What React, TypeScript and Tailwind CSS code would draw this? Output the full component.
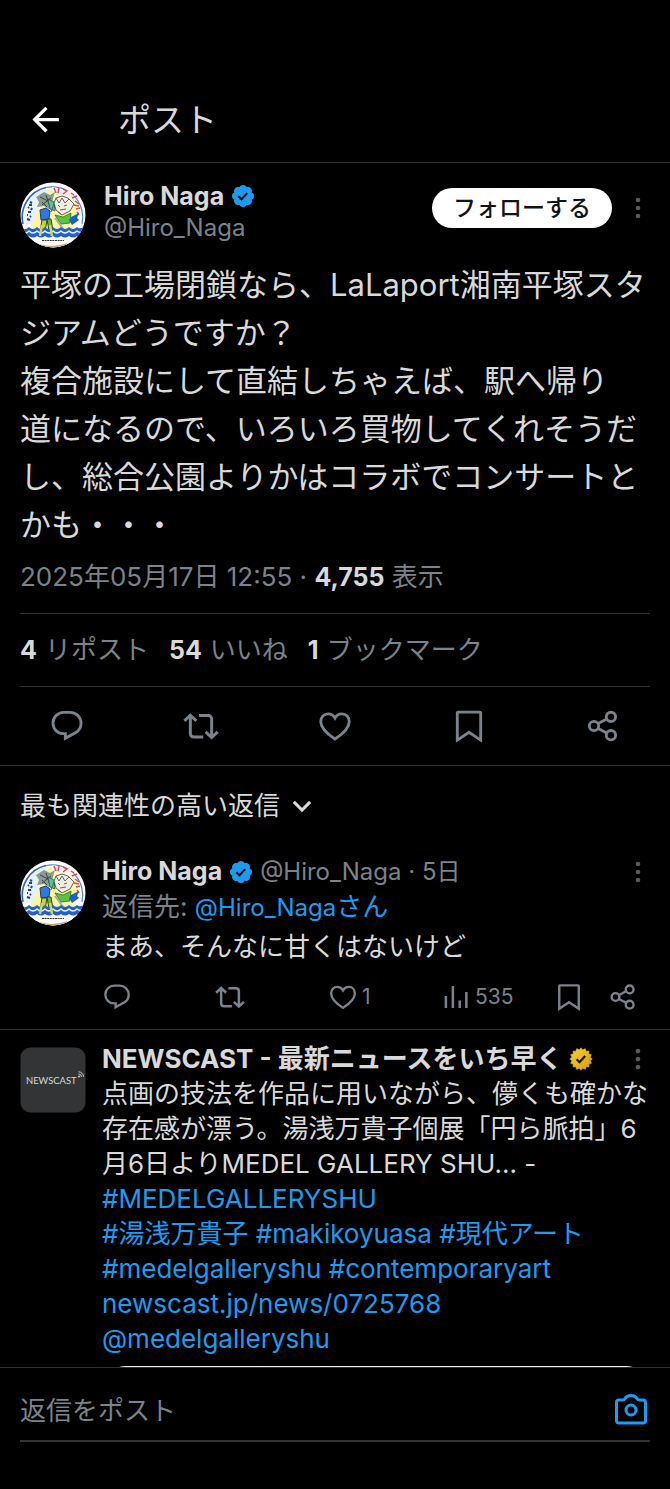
import { useState, type ReactNode } from 'react'

interface IconProps {
  className?: string
}

const GREY = 'text-[#7a828b]'
const FONT = "font-['Inter','Noto_Sans_CJK_JP',sans-serif]"

function Icon({ className = 'size-9', children }: IconProps & { children: ReactNode }) {
  return (
    <svg
      viewBox="0 0 24 24"
      className={`${className} shrink-0`}
      fill="none"
      stroke="currentColor"
      strokeWidth="1.9"
      aria-hidden="true"
    >
      {children}
    </svg>
  )
}

function BackIcon() {
  return (
    <Icon className="size-9">
      <path d="M20.600 11.700H4.700M12.300 3.900L4.500 11.700l7.800 7.800" strokeWidth="2.200" />
    </Icon>
  )
}

function ReplyIcon({ className }: IconProps) {
  return (
    <Icon className={className}>
      <path d="M9.76 2.9h4.36c4 0 7.23 3.24 7.23 7.23 0 2.6-1.41 5-3.73 6.32l-6.72 3.72v-3.06H9.76c-4 .08-7.1-3.1-7.1-7.11 0-3.92 3.18-7.1 7.1-7.1z" />
    </Icon>
  )
}

function RepostIcon({ className }: IconProps) {
  return (
    <Icon className={className}>
      <path d="M0.9 8.6L4.9 4.8l4 3.8M4.9 5.3V17c0 1.4 1 2.4 2.4 2.4h6.2M23.1 15.9l-4 3.8-4-3.8M19.1 19.2V7.4c0-1.4-1-2.4-2.4-2.4h-6" strokeWidth="2" />
    </Icon>
  )
}

function LikeIcon({ className }: IconProps) {
  return (
    <Icon className={className}>
      <path d="M12 6.700C11 4.900 9.300 3.900 7.400 3.900c-2.800 0-4.900 2.200-4.900 5.200 0 4.300 4 7.900 9.500 11.600 5.500-3.700 9.500-7.300 9.500-11.600 0-3-2.100-5.200-4.900-5.200-1.900 0-3.600 1-4.600 2.800z" />
    </Icon>
  )
}

function BookmarkIcon({ className }: IconProps) {
  return (
    <Icon className={className}>
      <path d="M4.7 2.7h14.6c.3 0 .5.2.5.5v18.2L12 16.2l-7.8 5.2V3.2c0-.3.2-.5.5-.5z" />
    </Icon>
  )
}

function ShareIcon({ className }: IconProps) {
  return (
    <Icon className={className}>
      <circle cx="6" cy="12" r="3.1" />
      <circle cx="17.3" cy="5.9" r="3.1" />
      <circle cx="17.3" cy="18.1" r="3.1" />
      <path d="M8.8 10.4l5.700-3M8.800 13.600l5.700 3" />
    </Icon>
  )
}

function ViewsIcon({ className }: IconProps) {
  return (
    <Icon className={className}>
      <path d="M3.900 20.800v-9.600M9.500 20.800V3.200M15 20.800v-6M20.300 20.800V8" strokeWidth="2" />
    </Icon>
  )
}

function VerifiedIcon() {
  return (
    <svg viewBox="0 0 22 22" className="size-[26px] shrink-0" role="img" aria-label="認証済みアカウント">
      <path
        fill="#1d9bf0"
        d="M20.396 11c-.018-.646-.215-1.275-.57-1.816-.354-.54-.852-.972-1.438-1.246.223-.607.27-1.264.14-1.897-.131-.634-.437-1.218-.882-1.687-.47-.445-1.053-.75-1.687-.882-.633-.13-1.29-.083-1.897.14-.273-.587-.704-1.086-1.245-1.44S11.647 1.62 11 1.604c-.646.017-1.273.213-1.813.568s-.969.854-1.24 1.44c-.608-.223-1.267-.272-1.902-.14-.635.13-1.22.436-1.69.882-.445.47-.749 1.055-.878 1.688-.13.633-.08 1.29.144 1.896-.587.274-1.087.705-1.443 1.245-.356.54-.555 1.17-.574 1.817.02.647.218 1.276.574 1.817.356.54.856.972 1.443 1.245-.224.606-.274 1.263-.144 1.896.13.634.433 1.218.877 1.688.47.443 1.054.747 1.687.878.633.132 1.29.084 1.897-.136.274.586.705 1.084 1.246 1.439.54.354 1.17.551 1.816.569.647-.016 1.276-.213 1.817-.567s.972-.854 1.245-1.44c.604.239 1.266.296 1.903.164.636-.132 1.22-.447 1.68-.907.46-.46.776-1.044.908-1.681s.075-1.299-.165-1.903c.586-.274 1.084-.705 1.439-1.246.354-.54.551-1.17.569-1.816z"
      />
      <path d="M7.1 11.2l2.6 2.6 4.900-5.200" fill="none" stroke="#000" strokeWidth="1.700" />
    </svg>
  )
}

// Sixteen-pointed seal used for organisation accounts
const sealPoints = Array.from({ length: 32 }, (_, i) => {
  const r = i % 2 ? 8.6 : 10.3
  const a = (i * Math.PI) / 16
  return `${(11 + r * Math.sin(a)).toFixed(2)},${(11 - r * Math.cos(a)).toFixed(2)}`
}).join(' ')

function GoldVerifiedIcon() {
  return (
    <svg viewBox="0 0 22 22" className="size-6 shrink-0" role="img" aria-label="認証済み組織">
      <defs>
        <linearGradient id="gold" x1="0" y1="0" x2="1" y2="1">
          <stop offset="0" stopColor="#f4d03c" />
          <stop offset="0.5" stopColor="#e6b91e" />
          <stop offset="1" stopColor="#d49a12" />
        </linearGradient>
      </defs>
      <polygon points={sealPoints} fill="url(#gold)" stroke="#dca915" strokeWidth="0.5" strokeLinejoin="round" />
      <path d="M7 11.3l2.7 2.7 5.1-5.8" fill="none" stroke="#1a1200" strokeWidth="2" />
    </svg>
  )
}

function MoreButton({ className = '' }: IconProps) {
  return (
    <button type="button" aria-label="もっと見る" className={`mr-2 shrink-0 text-[#565b60] ${className}`}>
      <svg viewBox="0 0 8 24" className="h-6 w-2" fill="currentColor" aria-hidden="true">
        <circle cx="4" cy="4" r="2.3" />
        <circle cx="4" cy="12" r="2.3" />
        <circle cx="4" cy="20" r="2.3" />
      </svg>
    </button>
  )
}

function HiroAvatar({ id }: { id: string }) {
  return (
    <svg viewBox="0 0 66 66" className="size-[66px] shrink-0" role="img" aria-label="Hiro Naga">
      <defs>
        <clipPath id={id}>
          <circle cx="33" cy="33" r="32.5" />
        </clipPath>
      </defs>
      <circle cx="33" cy="33" r="32.5" fill="#fbfcf6" />
      <g clipPath={`url(#${id})`}>
        <circle cx="33" cy="32" r="25" fill="#fcf6a4" />
        <path d="M3 42A30.5 30.5 0 0 1 26 5.5" fill="none" stroke="#2463d8" strokeWidth="1.6" />
        <path d="M26 5.500A30.500 30.500 0 0 1 62 42" fill="none" stroke="#4f86dd" strokeWidth="1.200" />
        <path d="M9 19c4-7 10-11 17-12l3 8-9 8-7 18-7 2z" fill="#e8f1f7" />
        <path d="M32 5l20 4 3 9-22-5z" fill="#fff0ee" />
        {/* lettering round the rim */}
        <path d="M34 6l2 5m3-5l-1 5m5-4l4 2-4 3m8-1l3 2m-2 3l5-2m-2 5l4 3m-5 1l5 1m-3 3l4-1m-3 4l2 3" fill="none" stroke="#e04a5a" strokeWidth="1.500" />
        <path d="M10 20l2 1m-3 2l3 0m-4 3l1-1m2 3l1-2m-4 4l3 0m-4 3l1 0m2 2l1-1m-4 3l3 1" fill="none" stroke="#173f9e" strokeWidth="2" />
        {/* figures */}
        <path d="M16 15l8-5 6 3 5-3-3 10 3 6-6 1-5-3-7 1 2-5z" fill="#8b9a92" />
        <path d="M20 15l8 4m-6 4l9-7m-5-3l4 12m-8-5l5 5" fill="none" stroke="#3a4645" strokeWidth="1" />
        <path d="M20 28l6-2 4 3-1 8-8 1z" fill="#2f78dd" stroke="#173b85" strokeWidth="1" />
        <path d="M28 17l6 3 1 9-5-2z" fill="#4cc7a0" stroke="#2c5a4a" strokeWidth="0.800" />
        <path d="M36 16l6-2 6 2 6 6-4 7-8 4-6-5-2-7z" fill="#f1ece2" stroke="#39443a" strokeWidth="0.800" />
        <path d="M36 16l3 5 3-5 3 5 4-4M38 23l2 2m4-1l3-1M40 28l6-1m-8 3l3 2M34 22l-3 8" fill="none" stroke="#4b564c" strokeWidth="0.900" />
        <path d="M35 33l8 2 8-4-1 10-9 1z" fill="#58c53c" stroke="#2a6c2a" strokeWidth="0.800" />
        <path d="M51 35l8-4-2 5 2 2-7 5-3-5z" fill="#1e5fd0" />
        <path d="M22 38l-3 18h5l3-18z" fill="#c8d43e" stroke="#1e4a2c" strokeWidth="1" />
        <path d="M27 37l3 18h4l-3-18z" fill="#7fae35" stroke="#1e4a2c" strokeWidth="1" />
        <path d="M35 36l12 16" stroke="#9db0aa" strokeWidth="2" />
        {/* sea */}
        <path d="M1 46q4 3 8-1 4 4 8 0 4 4 8 0 4 4 8 0 4 4 8 0 4 4 8 0 4 4 8 0 3 3 8-1v6l-5 6H5l-5-6z" fill="#2160cf" />
        <path d="M2 50q3 3 7-1 4 4 8 0 4 4 8 0 4 4 8 0 4 4 8 0 4 4 8 0 4 4 8 0 4 3 7 0" fill="none" stroke="#e5f4ff" strokeWidth="1.400" />
        <path d="M3 54q3 2 6 0 4 3 8 0 4 3 8 0 4 3 8 0 4 3 8 0 4 3 8 0 4 3 8 0l4 2-10 11H14L3 57z" fill="#fdfdfb" />
        <path d="M22 43l-2 11m10-11l2 11" stroke="#d3d94a" strokeWidth="2.400" />
        <path d="M22 58.500h22" stroke="#333" strokeWidth="1" strokeDasharray="2 0.600" />
        <path d="M20 63q13 4 27-1" fill="none" stroke="#c9a273" strokeWidth="1.600" />
      </g>
    </svg>
  )
}

function NewscastAvatar() {
  return (
    <svg viewBox="0 0 66 66" className="size-[66px] shrink-0" role="img" aria-label="NEWSCAST">
      <rect x="0.5" y="0.5" width="65" height="65" rx="10" fill="#333435" />
      <text x="6" y="37" fontSize="9.4" fill="#d8d8d8" className="font-['Lato',sans-serif]">
        NEWSCAST
      </text>
      <circle cx="59" cy="29.500" r="0.900" fill="#ddd" />
      <path d="M58.500 27a3 3 0 0 1 3 3M58.500 24.800a5 5 0 0 1 5 5" fill="none" stroke="#ddd" strokeWidth="0.900" />
    </svg>
  )
}

function ActionButton({ label, count, children }: { label: string; count?: string; children: ReactNode }) {
  return (
    <button type="button" aria-label={label} className="flex items-center gap-1">
      {children}
      {count && <span className="text-[21px] leading-[30px]">{count}</span>}
    </button>
  )
}

function Stat({ value, label }: { value: string; label: string }) {
  return (
    <a href="#stats" className="flex items-baseline gap-2">
      <span className="text-[25px] font-bold text-[#d9d9d9]">{value}</span>
      <span>{label}</span>
    </a>
  )
}

function Tag({ children }: { children: ReactNode }) {
  return (
    <a href="#tag" className="text-[#1d9bf0]">
      {children}
    </a>
  )
}

function FocusedPost() {
  return (
    <article>
      <div className="px-5">
        <header className="flex items-start pt-[17px]">
          <div className="pt-0.5">
            <HiroAvatar id="avatar-post" />
          </div>
          <div className="min-w-0 flex-1 pl-[18px] leading-8">
            <div className="flex items-center gap-1.5">
              <span className="truncate text-[25px] font-bold">Hiro Naga</span>
              <VerifiedIcon />
            </div>
            <div className={`truncate text-[24px] ${GREY}`}>@Hiro_Naga</div>
          </div>
          <button
            type="button"
            className="mt-2 mr-[22px] h-10 shrink-0 rounded-full bg-white px-[21px] text-[23px] font-medium text-[#0f1419]"
          >
            フォローする
          </button>
          <MoreButton className="mt-4" />
        </header>

        <p className="mt-[13px] text-[31px] leading-[48px]">
          平塚の工場閉鎖なら、LaLaport湘南平塚スタジアムどうですか？
          <br />
          複合施設にして直結しちゃえば、駅へ帰り
          <br />
          道になるので、いろいろ買物してくれそうだし、総合公園よりかはコラボでコンサートとかも・・・
        </p>

        <div className={`pt-2 pb-4 text-[26px] leading-10 ${GREY}`}>
          2025年05月17日 12:55 · <span className="text-[25px] font-bold text-[#d9d9d9]">4,755</span> 表示
        </div>

        <div className={`flex gap-5 border-y border-[#2f3336] py-4 text-[26px] leading-10 ${GREY}`}>
          <Stat value="4" label="リポスト" />
          <Stat value="54" label="いいね" />
          <Stat value="1" label="ブックマーク" />
        </div>
      </div>

      <div className={`grid grid-cols-5 justify-items-center border-b border-[#2f3336] py-[21px] ${GREY}`}>
        <ActionButton label="返信"><ReplyIcon /></ActionButton>
        <ActionButton label="リポスト"><RepostIcon /></ActionButton>
        <ActionButton label="いいね"><LikeIcon /></ActionButton>
        <ActionButton label="ブックマーク"><BookmarkIcon /></ActionButton>
        <ActionButton label="共有"><ShareIcon /></ActionButton>
      </div>
    </article>
  )
}

function ReplyPost() {
  return (
    <article className="flex gap-4 border-b border-[#2f3336] px-5 pt-3 pb-[17px]">
      <HiroAvatar id="avatar-reply" />
      <div className="-mt-1.5 min-w-0 flex-1 text-[26px] leading-[35px]">
        <div className="flex items-center gap-1.5">
          <span className="text-[25px] font-bold">Hiro Naga</span>
          <VerifiedIcon />
          <span className={`flex-1 text-[24px] ${GREY}`}>@Hiro_Naga · 5日</span>
          <MoreButton />
        </div>
        <div className={GREY}>
          返信先: <Tag><span className="text-[24px]">@Hiro_Naga</span>さん</Tag>
        </div>
        <p className="pt-1">まあ、そんなに甘くはないけど</p>
        <div className={`mt-[18px] mr-3 flex ${GREY}`}>
          <div className="grid flex-1 grid-cols-4 justify-items-start">
            <ActionButton label="返信"><ReplyIcon className="size-[30px]" /></ActionButton>
            <ActionButton label="リポスト"><RepostIcon className="size-[30px]" /></ActionButton>
            <ActionButton label="いいね" count="1"><LikeIcon className="size-[30px]" /></ActionButton>
            <ActionButton label="表示" count="535"><ViewsIcon className="size-[30px]" /></ActionButton>
          </div>
          <div className="flex gap-6">
            <ActionButton label="ブックマーク"><BookmarkIcon className="size-[30px]" /></ActionButton>
            <ActionButton label="共有"><ShareIcon className="size-[30px]" /></ActionButton>
          </div>
        </div>
      </div>
    </article>
  )
}

function PromotedPost() {
  return (
    <article className="flex gap-4 px-5 pt-[17px]">
      <NewscastAvatar />
      <div className="-mt-1.5 min-w-0 flex-1 text-[26px] leading-[35px]">
        <div className="flex items-center gap-1.5">
          <span className="truncate font-bold">NEWSCAST - 最新ニュースをいち早く</span>
          <GoldVerifiedIcon />
          <span className="ml-auto flex">
            <MoreButton />
          </span>
        </div>
        <p className="-mr-2">
          点画の技法を作品に用いながら、儚くも確かな存在感が漂う。湯浅万貴子個展「円ら脈拍」6
          <br />
          月6日よりMEDEL GALLERY SHU... -
          <br />
          <Tag>#MEDELGALLERYSHU</Tag>
          <br />
          <Tag>#湯浅万貴子</Tag> <Tag>#makikoyuasa</Tag> <Tag>#現代アート</Tag>
          <br />
          <Tag>#medelgalleryshu</Tag> <Tag>#contemporaryart</Tag>
          <br />
          <Tag>newscast.jp/news/0725768</Tag>
          <br />
          <Tag>@medelgalleryshu</Tag>
        </p>
        <div className="mt-2.5 h-72 rounded-3xl bg-[#eeeeee]" />
      </div>
    </article>
  )
}

export default function App() {
  const [reply, setReply] = useState('')

  return (
    <div lang="ja" className={`flex h-screen flex-col overflow-hidden bg-black text-[#d9d9d9] ${FONT}`}>
      <header className="flex shrink-0 items-center gap-[54px] border-b border-[#2f3336] px-7 pt-[94px] pb-4">
        <button type="button" aria-label="戻る" className="text-white">
          <BackIcon />
        </button>
        <h1 className="text-[33px] leading-[52px]">ポスト</h1>
      </header>

      <main className="min-h-0 flex-1 overflow-hidden">
        <FocusedPost />
        <button type="button" className="flex items-center gap-2 px-5 pt-5 pb-[22px] text-[26px] leading-10">
          最も関連性の高い返信
          <Icon className="size-7">
            <path d="M5 8.500l7 7 7-7" strokeWidth="2.600" />
          </Icon>
        </button>
        <ReplyPost />
        <PromotedPost />
      </main>

      <footer className="shrink-0 border-t border-[#2f3336] px-5 pb-[47px]">
        <div className="flex items-center border-b-2 border-[#2f3336] pt-6 pb-3">
          <input
            type="text"
            aria-label="返信をポスト"
            placeholder="返信をポスト"
            value={reply}
            onChange={e => setReply(e.target.value)}
            className="h-9 min-w-0 flex-1 bg-transparent text-[26px] outline-none placeholder:text-[#7a828b]"
          />
          <button type="button" aria-label="写真を追加" className="text-[#1d9bf0]">
            <svg viewBox="0 0 38 36" className="h-9 w-[38px]" fill="none" stroke="currentColor" strokeWidth="3" aria-hidden="true">
              <path d="M7 8h3.500c1 0 1.700-.4 2.300-1.200C14 4.700 15.500 3.500 19 3.500s5 1.200 6.200 3.300c.6.800 1.300 1.200 2.300 1.200H31c1.700 0 2.500 1 2.500 2.500v18c0 1.500-.8 2.500-2.500 2.500H7c-1.700 0-2.500-1-2.500-2.500v-18C4.500 9 5.300 8 7 8z" />
              <circle cx="19" cy="18" r="5" />
            </svg>
          </button>
        </div>
      </footer>
    </div>
  )
}
